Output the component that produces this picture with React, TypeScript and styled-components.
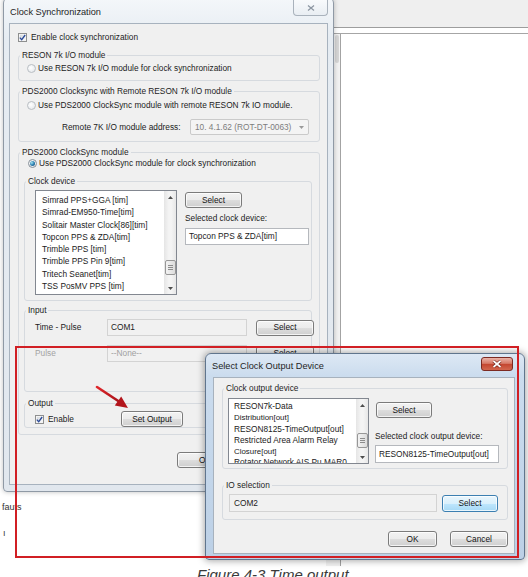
import styled, { createGlobalStyle } from "styled-components";

const ui = `"Liberation Sans", Arial, sans-serif`;

const GlobalStyle = createGlobalStyle`
  * { box-sizing: border-box; }
  html, body { margin: 0; padding: 0; background: #ffffff; }
  body {
    font-family: ${ui};
    font-size: 8.3px;
    line-height: 11px;
    color: #1b1b1b;
  }
`;

const Page = styled.div`
  width: 528px;
  height: 577px;
  overflow: hidden;
  display: flex;
  flex-direction: column;
`;

const Desktop = styled.div`
  position: relative;
  height: 566px;
  flex: none;
`;

const Caption = styled.p`
  margin: 0;
  padding-left: 197px;
  font: italic 15px/17px ${ui};
  color: #3a3a3a;
`;

/* application window sitting behind the dialogs */
const BackWindow = styled.div`
  position: absolute;
  left: 326px;
  top: 0;
  right: 0;
  bottom: 0;
  display: flex;
  flex-direction: column;
  background: #fff;
`;

const BackToolbar = styled.div`
  height: 28px;
  flex: none;
  background: #efefef;
  border-bottom: 1px solid #9d9d9d;
`;

const BackBody = styled.div`
  flex: 1;
  display: flex;
  margin-top: 5px;
  border-top: 1px solid #a6a6a6;
`;

const BackGutter = styled.div`
  width: 15px;
  flex: none;
  background: #f2f2f2;
  border-right: 1px solid #a3a3a3;
  padding: 1px 0 0 9px;
`;

const BackThumb = styled.div`
  width: 4px;
  height: 28px;
  border-radius: 2px;
  background: #d6d6d6;
`;

const Scrap = styled.span<{ $x: number; $y: number }>`
  position: absolute;
  left: ${(p) => p.$x}px;
  top: ${(p) => p.$y}px;
  font-size: 9px;
  color: #333;
`;

/* Windows 7 style dialog frame */
const Window = styled.div`
  position: absolute;
  display: flex;
  flex-direction: column;
  border-radius: 6px 6px 4px 4px;
`;

const MainWindow = styled(Window)`
  left: 3px;
  top: -3px;
  width: 331px;
  height: 495px;
  padding: 0 5px 6px 5px;
  border: 1px solid #8f99a5;
  background: linear-gradient(to bottom, #f4f7fa 0%, #e6ecf2 40px, #e1e7ee 100%);
  box-shadow: 0 0 5px rgba(0, 0, 0, 0.25);
`;

const OutputWindow = styled(Window)`
  left: 205px;
  top: 353px;
  width: 320px;
  height: 207px;
  padding: 0 9px 5px 7px;
  border: 1px solid #60758d;
  background: linear-gradient(to bottom, #dde8f4 0%, #cbdcee 22px, #bcd0e6 100%);
  box-shadow: 0 0 7px 1px rgba(0, 0, 0, 0.35);
`;

const TitleBar = styled.div<{ $h: number }>`
  height: ${(p) => p.$h}px;
  flex: none;
  display: flex;
  align-items: flex-start;
  justify-content: space-between;
`;

const Title = styled.span<{ $mt: number; $ml?: number }>`
  margin-top: ${(p) => p.$mt}px;
  margin-left: ${(p) => p.$ml ?? 0}px;
  font-size: 9.2px;
  line-height: 12px;
  color: #1e1e1e;
`;

const CloseButton = styled.div<{ $active?: boolean; $w: number; $h: number; $mt: number; $mr?: number }>`
  width: ${(p) => p.$w}px;
  height: ${(p) => p.$h}px;
  margin-top: ${(p) => p.$mt}px;
  margin-right: ${(p) => p.$mr ?? 0}px;
  display: flex;
  align-items: center;
  justify-content: center;
  border: 1px solid ${(p) => (p.$active ? "#7c2a22" : "#a9b2bc")};
  border-top-width: ${(p) => (p.$active ? 1 : 0)}px;
  border-radius: ${(p) => (p.$active ? "3px" : "0 0 4px 4px")};
  background: ${(p) =>
    p.$active
      ? "linear-gradient(to bottom, #eab3a8 0%, #d77a68 45%, #c44630 52%, #d2674f 100%)"
      : "linear-gradient(to bottom, #f8fafc 0%, #e9eef3 100%)"};
`;

const Client = styled.div<{ $pad: string }>`
  flex: 1;
  display: flex;
  flex-direction: column;
  padding: ${(p) => p.$pad};
  background: #f0f0f0;
  border: 1px solid #a7b2be;
  overflow: hidden;
`;

/* group boxes */
const Group = styled.fieldset<{ $mt?: number }>`
  margin: ${(p) => p.$mt ?? 0}px 0 0 0;
  padding: 0;
  min-width: 0;
  border: 1px solid #d6dadf;
  border-radius: 3px;
  flex: none;
`;

const Legend = styled.legend`
  margin-left: 1px;
  padding: 0 2px;
  line-height: 11px;
  color: #1e1e1e;
`;

const GroupBody = styled.div<{ $pad: string; $row?: boolean; $gap?: number }>`
  display: flex;
  flex-direction: ${(p) => (p.$row ? "row" : "column")};
  gap: ${(p) => p.$gap ?? 0}px;
  padding: ${(p) => p.$pad};
`;

const Row = styled.div<{ $h?: number; $mt?: number; $pl?: number; $gap?: number; $end?: boolean }>`
  display: flex;
  align-items: center;
  justify-content: ${(p) => (p.$end ? "flex-end" : "flex-start")};
  flex: none;
  height: ${(p) => p.$h ?? 11}px;
  margin-top: ${(p) => p.$mt ?? 0}px;
  padding-left: ${(p) => p.$pl ?? 0}px;
  gap: ${(p) => p.$gap ?? 0}px;
`;

const Label = styled.span<{ $w?: number; $ml?: number; $dim?: boolean }>`
  flex: none;
  width: ${(p) => (p.$w ? `${p.$w}px` : "auto")};
  margin-left: ${(p) => p.$ml ?? 0}px;
  white-space: nowrap;
  color: ${(p) => (p.$dim ? "#a3a3a3" : "#1b1b1b")};
`;

const Column = styled.div<{ $w: number }>`
  width: ${(p) => p.$w}px;
  flex: none;
  display: flex;
  flex-direction: column;
  align-items: flex-start;
`;

/* check box and radio button */
const CheckBox = styled.span`
  width: 9px;
  height: 9px;
  flex: none;
  display: flex;
  align-items: center;
  justify-content: center;
  border: 1px solid #8e8f8f;
  background: linear-gradient(135deg, #cdd2d7 0%, #f8f8f8 85%);
  box-shadow: inset 0 0 0 1px #f4f4f4;
`;

const RadioButton = styled.span<{ $on?: boolean }>`
  width: 9px;
  height: 9px;
  flex: none;
  border-radius: 50%;
  display: flex;
  align-items: center;
  justify-content: center;
  border: 1px solid ${(p) => (p.$on ? "#87919a" : "#b9bec3")};
  background: radial-gradient(circle at 40% 40%, #ffffff 0%, #dfe3e7 100%);

  &::after {
    content: "";
    display: ${(p) => (p.$on ? "block" : "none")};
    width: 5px;
    height: 5px;
    border-radius: 50%;
    background: radial-gradient(circle at 35% 35%, #a6e4f2 0%, #2c82b2 50%, #123f68 100%);
  }
`;

const Check = () => (
  <CheckBox>
    <svg width="7" height="7" viewBox="0 0 7 7">
      <path d="M0.8 3.6 L2.7 5.7 L6.2 1" fill="none" stroke="#2b4a98" strokeWidth="1.3" />
    </svg>
  </CheckBox>
);

/* push buttons */
const Button = styled.button<{ $w: number; $h?: number; $focus?: boolean; $ml?: number; $mt?: number }>`
  width: ${(p) => p.$w}px;
  height: ${(p) => p.$h ?? 16}px;
  margin: ${(p) => p.$mt ?? 0}px 0 0 ${(p) => p.$ml ?? 0}px;
  padding: 0;
  flex: none;
  font: 8.3px/11px ${ui};
  color: #141414;
  border: 1px solid ${(p) => (p.$focus ? "#3c7fb1" : "#7b7b7b")};
  border-radius: 3px;
  background: ${(p) =>
    p.$focus
      ? "linear-gradient(to bottom, #eaf6fd 0%, #d9f0fc 50%, #bee6fd 51%, #a7d9f5 100%)"
      : "linear-gradient(to bottom, #f2f2f2 0%, #ebebeb 50%, #dddddd 51%, #cfcfcf 100%)"};
  box-shadow: inset 0 0 0 1px rgba(255, 255, 255, 0.75);
`;

/* text boxes */
const Field = styled.div<{ $w: number; $h: number; $read?: boolean; $dim?: boolean; $mt?: number; $pl?: number }>`
  width: ${(p) => p.$w}px;
  height: ${(p) => p.$h}px;
  margin-top: ${(p) => p.$mt ?? 0}px;
  flex: none;
  display: flex;
  align-items: center;
  padding-left: ${(p) => p.$pl ?? 3}px;
  white-space: nowrap;
  overflow: hidden;
  background: ${(p) => (p.$read ? "#f1f1f1" : "#ffffff")};
  border: 1px solid ${(p) => (p.$read ? "#d3d3d3" : "#b5b8bd")};
  color: ${(p) => (p.$dim ? "#a0a0a0" : "#1b1b1b")};
`;

const Combo = styled.div`
  width: 119px;
  height: 16px;
  flex: none;
  display: flex;
  align-items: center;
  justify-content: space-between;
  padding: 0 4px;
  background: #f4f4f4;
  border: 1px solid #cacaca;
  border-radius: 2px;
  color: #7d7d7d;
`;

/* list box with a vertical scroll bar */
const ListBox = styled.div<{ $w: number; $h: number }>`
  width: ${(p) => p.$w}px;
  height: ${(p) => p.$h}px;
  flex: none;
  display: flex;
  background: #fff;
  border: 1px solid #828790;
`;

const ListItems = styled.div<{ $pt: number; $pl: number }>`
  flex: 1;
  padding: ${(p) => p.$pt}px 0 0 ${(p) => p.$pl}px;
  overflow: hidden;
  white-space: nowrap;
`;

const ListLine = styled.div<{ $h: number; $small?: boolean }>`
  height: ${(p) => p.$h}px;
  line-height: ${(p) => p.$h}px;
  font-size: ${(p) => (p.$small ? "7.9px" : "8.3px")};
`;

const ScrollBar = styled.div`
  width: 12px;
  flex: none;
  display: flex;
  flex-direction: column;
  background: linear-gradient(to right, #e5e5e5 0%, #f4f4f4 40%, #f4f4f4 60%, #e7e7e7 100%);
`;

const ScrollArrow = styled.div`
  height: 12px;
  flex: none;
  display: flex;
  align-items: center;
  justify-content: center;
`;

const ScrollTrack = styled.div`
  flex: 1;
  display: flex;
  flex-direction: column;
  align-items: center;
`;

const ScrollThumb = styled.div<{ $top: number }>`
  margin-top: ${(p) => p.$top}px;
  width: 11px;
  height: 15px;
  display: flex;
  align-items: center;
  justify-content: center;
  border: 1px solid #979797;
  border-radius: 2px;
  background: linear-gradient(to right, #f3f3f3, #dcdcdc);
`;

const Arrow = ({ up, color = "#4d4d4d" }: { up?: boolean; color?: string }) => (
  <svg width="5" height="3" viewBox="0 0 5 3">
    <path d={up ? "M0 3 L2.5 0 L5 3Z" : "M0 0 L2.5 3 L5 0Z"} fill={color} />
  </svg>
);

const Scroller = ({ thumbTop }: { thumbTop: number }) => (
  <ScrollBar>
    <ScrollArrow>
      <Arrow up />
    </ScrollArrow>
    <ScrollTrack>
      <ScrollThumb $top={thumbTop}>
        <svg width="5" height="5" viewBox="0 0 5 5">
          <path d="M0 0.5H5M0 2.5H5M0 4.5H5" stroke="#8c8c8c" strokeWidth="1" />
        </svg>
      </ScrollThumb>
    </ScrollTrack>
    <ScrollArrow>
      <Arrow />
    </ScrollArrow>
  </ScrollBar>
);

/* red annotation drawn over the screenshot */
const Highlight = styled.div`
  position: absolute;
  left: 15px;
  top: 346px;
  width: 504px;
  height: 212px;
  border: 2px solid #d11f24;
  pointer-events: none;
`;

const Pointer = styled.svg`
  position: absolute;
  left: 90px;
  top: 380px;
  pointer-events: none;
`;

const clockDevices = [
  "Simrad PPS+GGA [tim]",
  "Simrad-EM950-Time[tim]",
  "Solitair Master Clock[86][tim]",
  "Topcon PPS & ZDA[tim]",
  "Trimble PPS [tim]",
  "Trimble PPS Pin 9[tim]",
  "Tritech Seanet[tim]",
  "TSS PosMV PPS [tim]",
];

const outputDevices: { text: string; small?: boolean }[] = [
  { text: "RESON7k-Data" },
  { text: "Distribution[out]", small: true },
  { text: "RESON8125-TimeOutput[out]" },
  { text: "Restricted  Area Alarm Relay" },
  { text: "Closure[out]", small: true },
  { text: "Rotator Network AIS Pu MAR0" },
];

const CloseGlyph = ({ active }: { active?: boolean }) =>
  active ? (
    <svg width="10" height="8" viewBox="0 0 10 8">
      <path d="M1.5 1 L8.5 7 M8.5 1 L1.5 7" stroke="#6e1d14" strokeWidth="3" />
      <path d="M1.5 1 L8.5 7 M8.5 1 L1.5 7" stroke="#ffffff" strokeWidth="1.7" />
    </svg>
  ) : (
    <svg width="8" height="6" viewBox="0 0 8 6">
      <path d="M1 0.5 L7 5.5 M7 0.5 L1 5.5" stroke="#8b95a1" strokeWidth="1.2" />
    </svg>
  );

export default function App() {
  return (
    <>
      <GlobalStyle />
      <Page>
        <Desktop>
          <BackWindow>
            <BackToolbar />
            <BackBody>
              <BackGutter>
                <BackThumb />
              </BackGutter>
            </BackBody>
          </BackWindow>

          <Scrap $x={2} $y={502}>fauts</Scrap>
          <Scrap $x={3} $y={528}>ı</Scrap>

          <MainWindow>
            <TitleBar $h={25}>
              <Title $mt={8} $ml={1}>Clock Synchronization</Title>
              <CloseButton $w={35} $h={16} $mt={2}>
                <CloseGlyph />
              </CloseButton>
            </TitleBar>
            <Client $pad="8px 7px 0 8px">
              <Row $gap={4}>
                <Check />
                <Label>Enable clock synchronization</Label>
              </Row>

              <Group $mt={7}>
                <Legend>RESON 7k I/O module</Legend>
                <GroupBody $pad="2px 8px 6px 8px">
                  <Row $gap={2}>
                    <RadioButton />
                    <Label>Use RESON 7k I/O module for clock synchronization</Label>
                  </Row>
                </GroupBody>
              </Group>

              <Group $mt={5}>
                <Legend>PDS2000 Clocksync with Remote RESON 7k I/O module</Legend>
                <GroupBody $pad="3px 8px 6px 8px">
                  <Row $gap={2}>
                    <RadioButton />
                    <Label>Use PDS2000 ClockSync module with remote RESON 7k IO module.</Label>
                  </Row>
                  <Row $h={16} $mt={8}>
                    <Label $w={128} $ml={35}>Remote 7K I/O module address:</Label>
                    <Combo>
                      <span>10. 4.1.62 (ROT-DT-0063)</span>
                      <Arrow color="#9a9a9a" />
                    </Combo>
                  </Row>
                </GroupBody>
              </Group>

              <Group $mt={5}>
                <Legend>PDS2000 ClockSync module</Legend>
                <GroupBody $pad="0 7px 6px 5px">
                  <Row $gap={2} $pl={4}>
                    <RadioButton $on />
                    <Label>Use PDS2000 ClockSync module for clock synchronization</Label>
                  </Row>

                  <Group $mt={7}>
                    <Legend>Clock device</Legend>
                    <GroupBody $row $gap={8} $pad="3px 2px 5px 10px">
                      <ListBox $w={142} $h={105}>
                        <ListItems $pt={3} $pl={6}>
                          {clockDevices.map((d) => (
                            <ListLine key={d} $h={12.3}>
                              {d}
                            </ListLine>
                          ))}
                        </ListItems>
                        <Scroller thumbTop={57} />
                      </ListBox>
                      <Column $w={124}>
                        <Button $w={57} $mt={2}>Select</Button>
                        <Row $mt={5}>
                          <Label>Selected clock device:</Label>
                        </Row>
                        <Field $w={124} $h={17} $mt={4}>
                          Topcon PPS &amp; ZDA[tim]
                        </Field>
                      </Column>
                    </GroupBody>
                  </Group>

                  <Group $mt={4}>
                    <Legend>Input</Legend>
                    <InputGrid>
                      <Label>Time - Pulse</Label>
                      <Field $w={140} $h={17} $read>
                        COM1
                      </Field>
                      <Button $w={58}>Select</Button>
                      <Label $dim>Pulse</Label>
                      <Field $w={140} $h={17} $read $dim>
                        --None--
                      </Field>
                      <Button $w={58}>Select</Button>
                    </InputGrid>
                  </Group>

                  <Group $mt={6}>
                    <Legend>Output</Legend>
                    <GroupBody $row $pad="2px 0 0 10px">
                      <Row $h={16} $gap={4}>
                        <Check />
                        <Label $w={69}>Enable</Label>
                        <Button $w={62}>Set Output</Button>
                      </Row>
                    </GroupBody>
                  </Group>
                </GroupBody>
              </Group>

              <ButtonRow $mt={17} $pr={23} $gap={8}>
                <Button $w={56}>OK</Button>
                <Button $w={56}>Cancel</Button>
              </ButtonRow>
            </Client>
          </MainWindow>

          <OutputWindow>
            <TitleBar $h={23}>
              <Title $mt={6} $ml={-1}>Select Clock Output Device</Title>
              <CloseButton $active $w={32} $h={14} $mt={3} $mr={2}>
                <CloseGlyph active />
              </CloseButton>
            </TitleBar>
            <Client $pad="5px 6px 6px 8px">
              <Group>
                <Legend>Clock output device</Legend>
                <GroupBody $row $gap={6} $pad="4px 8px 4px 5px">
                  <ListBox $w={141} $h={66}>
                    <ListItems $pt={2} $pl={5}>
                      {outputDevices.map((d) => (
                        <ListLine key={d.text} $h={11.3} $small={d.small}>
                          {d.text}
                        </ListLine>
                      ))}
                    </ListItems>
                    <Scroller thumbTop={22} />
                  </ListBox>
                  <Column $w={124}>
                    <Button $w={56} $mt={4} $ml={1}>Select</Button>
                    <Row $mt={13}>
                      <Label>Selected clock output device:</Label>
                    </Row>
                    <Field $w={124} $h={18} $mt={3}>
                      RESON8125-TimeOutput[out]
                    </Field>
                  </Column>
                </GroupBody>
              </Group>

              <Group $mt={11}>
                <Legend>IO selection</Legend>
                <GroupBody $row $gap={5} $pad="3px 8px 7px 6px">
                  <Row $h={18} $gap={5}>
                    <Field $w={208} $h={18} $read $pl={4}>
                      COM2
                    </Field>
                    <Button $w={56} $h={17} $focus>Select</Button>
                  </Row>
                </GroupBody>
              </Group>

              <ButtonRow $mt={11} $pr={0} $gap={13}>
                <Button $w={49}>OK</Button>
                <Button $w={58}>Cancel</Button>
              </ButtonRow>
            </Client>
          </OutputWindow>

          <Highlight />
          <Pointer width="45" height="35" viewBox="0 0 45 35">
            <defs>
              <linearGradient id="arrowRed" x1="0" y1="0" x2="1" y2="1">
                <stop offset="0" stopColor="#e0262a" />
                <stop offset="1" stopColor="#a8121a" />
              </linearGradient>
            </defs>
            <path d="M7 7 L29 21.5" stroke="url(#arrowRed)" strokeWidth="2.6" strokeLinecap="round" />
            <path d="M38 28 L24.8 25.4 L31.2 16.6 Z" fill="#b3151c" />
          </Pointer>
        </Desktop>
        <Caption>Figure 4-3 Time output</Caption>
      </Page>
    </>
  );
}

const InputGrid = styled.div`
  display: grid;
  grid-template-columns: 63px 140px 58px;
  grid-auto-rows: 17px;
  column-gap: 9px;
  row-gap: 9px;
  align-items: center;
  padding: 3px 0 29px 10px;
`;

const ButtonRow = styled.div<{ $mt: number; $pr: number; $gap: number }>`
  display: flex;
  justify-content: flex-end;
  flex: none;
  gap: ${(p) => p.$gap}px;
  margin-top: ${(p) => p.$mt}px;
  padding-right: ${(p) => p.$pr}px;
`;
